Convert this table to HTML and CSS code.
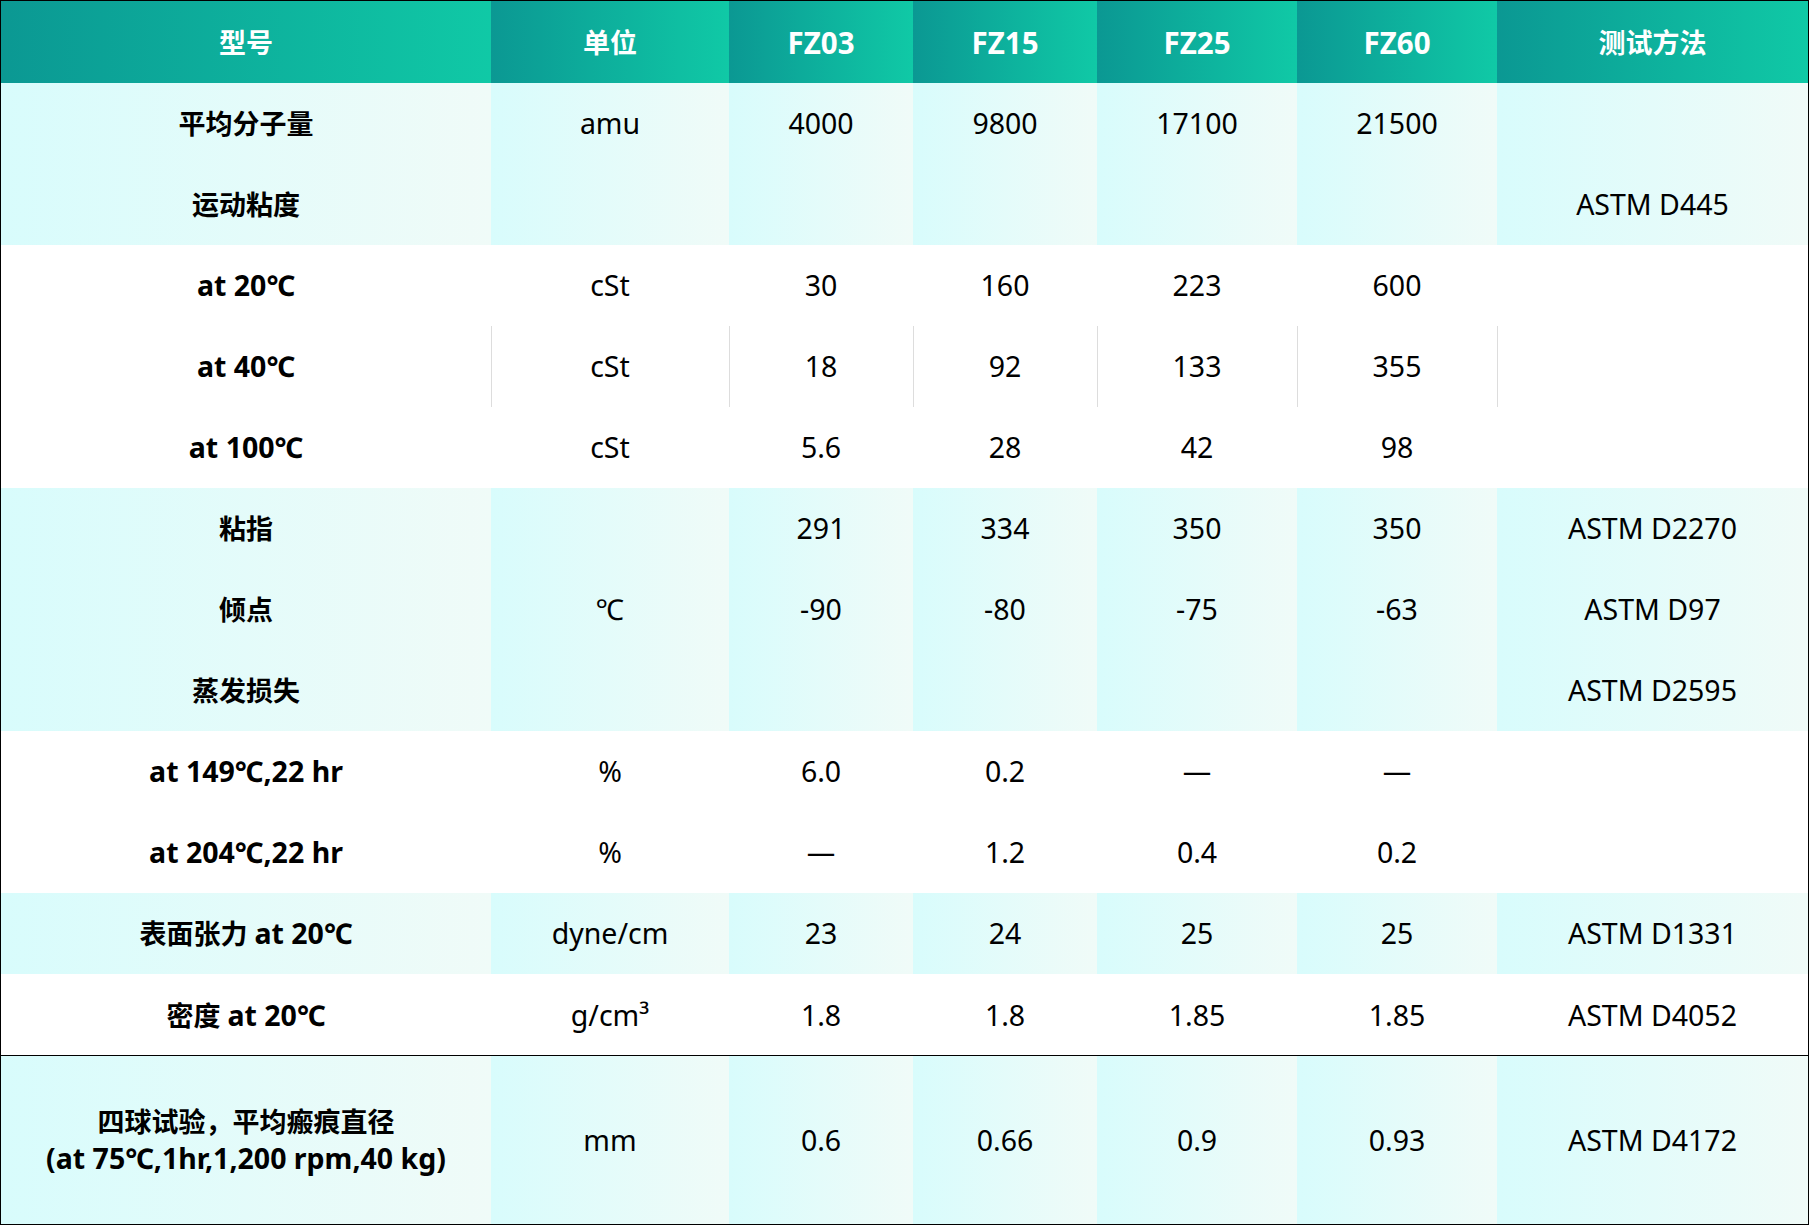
FILE: index.html
```html
<!DOCTYPE html>
<html lang="zh-CN">
<head>
<meta charset="utf-8">
<title>FZ 系列物性表</title>
<link rel="stylesheet" href="styles.css">
</head>
<body>
<table class="spec">
  <colgroup>
    <col class="c-name"><col class="c-unit"><col class="c-sm"><col class="c-sm"><col class="c-md"><col class="c-md"><col class="c-method">
  </colgroup>
  <thead>
    <tr class="head">
      <th>型号</th><th>单位</th><th class="en">FZ03</th><th class="en">FZ15</th><th class="en">FZ25</th><th class="en">FZ60</th><th>测试方法</th>
    </tr>
  </thead>
  <tbody class="tint">
    <tr><th>平均分子量</th><td>amu</td><td>4000</td><td>9800</td><td>17100</td><td>21500</td><td></td></tr>
    <tr><th>运动粘度</th><td></td><td></td><td></td><td></td><td></td><td>ASTM D445</td></tr>
  </tbody>
  <tbody class="plain">
    <tr><th class="en">at 20℃</th><td>cSt</td><td>30</td><td>160</td><td>223</td><td>600</td><td></td></tr>
    <tr class="ruled"><th class="en">at 40℃</th><td>cSt</td><td>18</td><td>92</td><td>133</td><td>355</td><td></td></tr>
    <tr><th class="en">at 100℃</th><td>cSt</td><td>5.6</td><td>28</td><td>42</td><td>98</td><td></td></tr>
  </tbody>
  <tbody class="tint">
    <tr><th>粘指</th><td></td><td>291</td><td>334</td><td>350</td><td>350</td><td>ASTM D2270</td></tr>
    <tr><th>倾点</th><td>℃</td><td>-90</td><td>-80</td><td>-75</td><td>-63</td><td>ASTM D97</td></tr>
    <tr><th>蒸发损失</th><td></td><td></td><td></td><td></td><td></td><td>ASTM D2595</td></tr>
  </tbody>
  <tbody class="plain">
    <tr><th class="en">at 149℃,22 hr</th><td>%</td><td>6.0</td><td>0.2</td><td>—</td><td>—</td><td></td></tr>
    <tr><th class="en">at 204℃,22 hr</th><td>%</td><td>—</td><td>1.2</td><td>0.4</td><td>0.2</td><td></td></tr>
  </tbody>
  <tbody class="tint">
    <tr><th>表面张力 <span class="en">at 20℃</span></th><td>dyne/cm</td><td>23</td><td>24</td><td>25</td><td>25</td><td>ASTM D1331</td></tr>
  </tbody>
  <tbody class="plain">
    <tr class="split"><th>密度 <span class="en">at 20℃</span></th><td>g/cm³</td><td>1.8</td><td>1.8</td><td>1.85</td><td>1.85</td><td>ASTM D4052</td></tr>
  </tbody>
  <tbody class="tint">
    <tr class="tall"><th>四球试验，平均瘢痕直径<br><span class="en">(at 75℃,1hr,1,200 rpm,40 kg)</span></th><td>mm</td><td>0.6</td><td>0.66</td><td>0.9</td><td>0.93</td><td>ASTM D4172</td></tr>
  </tbody>
</table>
</body>
</html>
```

FILE: styles.css
```css
html, body {
  margin: 0;
  padding: 0;
  background: #ffffff;
}

body {
  width: 1809px;
  height: 1225px;
  overflow: hidden;
}

.spec {
  width: 1809px;
  table-layout: fixed;
  border-collapse: separate;
  border-spacing: 0;
  border: 1px solid #000;
  font-family: "Noto Sans", "Noto Sans CJK SC", sans-serif;
  font-size: 27px;
  color: #000;
}

.c-name { width: 490px; }
.c-unit { width: 238px; }
.c-sm { width: 184px; }
.c-md { width: 200px; }
.c-method { width: 311px; }

.spec th,
.spec td {
  padding: 0;
  height: 81px;
  box-sizing: border-box;
  text-align: center;
  vertical-align: middle;
  line-height: 37px;
  white-space: nowrap;
}

.spec td {
  font-weight: 400;
  font-size: 28.5px;
}

.spec tbody th {
  font-weight: 700;
}

.spec .en {
  font-size: 28.5px;
}

.head th {
  height: 82px;
  color: #ffffff;
  font-weight: 700;
  background: linear-gradient(90deg, #0b9893 0%, #10c9a6 100%);
}

.head th.en {
  font-size: 29.5px;
}

.tint th,
.tint td {
  background: linear-gradient(90deg, #d8fcfc 0%, #f0fbf8 100%);
}

.plain th,
.plain td {
  background: #ffffff;
}

.ruled td {
  box-shadow: inset 1px 0 0 #dddddd;
}

.split th,
.split td {
  height: 82px;
  box-shadow: inset 0 -1px 0 #000;
}

.tall th,
.tall td {
  height: 168px;
}
```
